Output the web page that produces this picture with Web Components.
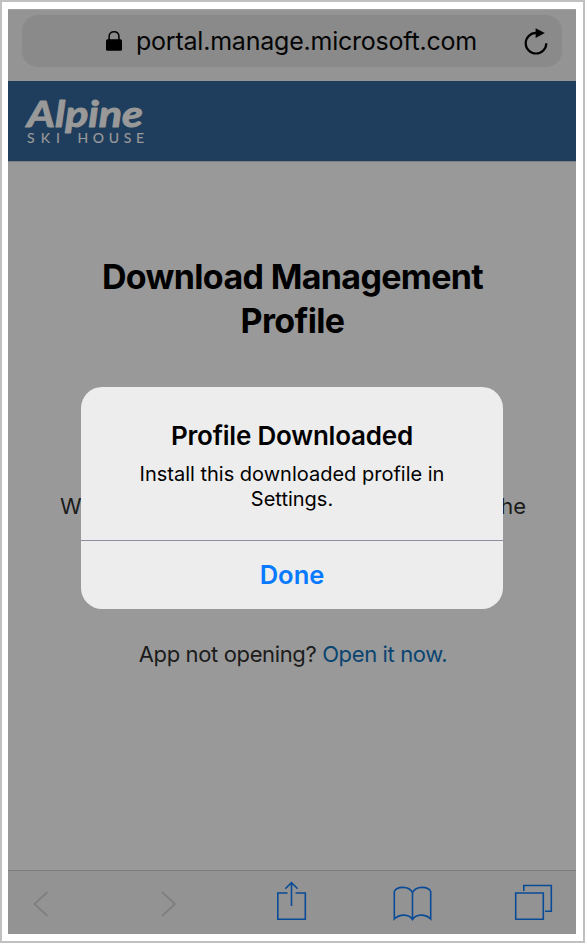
<!DOCTYPE html>
<html lang="en">
<head>
<meta charset="utf-8">
<title>Download Management Profile</title>
<style>
html,body{margin:0;height:100%;background:#fff;font-family:Inter,"Liberation Sans",sans-serif}
</style>
</head>
<body>
<phone-screen>
  <address-bar slot="top">portal.manage.microsoft.com</address-bar>
  <brand-header slot="top"></brand-header>
  <profile-page>
    <span slot="title">Download Management<br>Profile</span>
    <span slot="start">W</span><span slot="end">he</span>
    <span slot="question">App not opening?</span>
    <span slot="link">Open it now.</span>
  </profile-page>
  <browser-toolbar slot="bottom"></browser-toolbar>
  <alert-dialog slot="overlay">
    <span slot="title">Profile Downloaded</span>
    Install this downloaded profile in<br>Settings.
    <span slot="action">Done</span>
  </alert-dialog>
</phone-screen>
<script>
const define = (name, html) => customElements.define(name, class extends HTMLElement {
  constructor() {
    super();
    this.attachShadow({ mode: 'open' }).innerHTML = html;
  }
});

define('phone-screen', `
<style>
:host{display:block;box-sizing:border-box;width:585px;height:943px;border:2px solid #c0c0c0;padding:7px 7px 7px 6px;background:#fff}
.screen{position:relative;box-sizing:border-box;width:568px;height:925px;display:grid;grid-template-rows:auto 1fr auto;background:#999}
.overlay{position:absolute;left:73px;top:378px;width:422px}
</style>
<div class="screen"><div><slot name="top"></slot></div><slot></slot><slot name="bottom"></slot><div class="overlay"><slot name="overlay"></slot></div></div>`);

define('address-bar', `
<style>
:host{display:block;box-sizing:border-box;height:72px;padding:5px 14px 0;background:#949494;border-top:1px solid #a2a2a2}
.field{box-sizing:border-box;height:52px;border-radius:16px;background:#8a8a8a;display:grid;grid-template-columns:84px 30px 1fr 39px;align-items:center;color:#050505}
.url{font-size:25px;letter-spacing:-.22px;white-space:nowrap;line-height:52px}
svg{display:block}
.lock{justify-self:start}
</style>
<div class="field"><i></i>
<svg class="lock" width="16" height="20" viewBox="0 0 16 20"><path d="M3.100 9V5.600C3.100 2.400 5.200.8 8 .8s4.900 1.600 4.900 4.800V9" fill="none" stroke="#000" stroke-width="1.500"/><rect x="0" y="8.300" width="16" height="11.500" rx="1.500" fill="#000"/></svg>
<span class="url"><slot></slot></span>
<svg width="26" height="28" viewBox="0 0 26 28"><path d="M13 5.900A10.300 10.300 0 1 0 23.300 16.200" fill="none" stroke="#000" stroke-width="2.200"/><path d="M12.600 1.200V11L21.800 5.900Z" fill="#000"/></svg>
</div>`);

define('brand-header', `
<style>
:host{display:block;box-sizing:border-box;height:81px;background:#1f3d5c;border-bottom:1px solid #808080;padding:15px 18px}
svg{display:block;overflow:visible}
</style>
<svg width="124" height="50" viewBox="0 0 124 50" fill="#999">
<text x="1" y="31" font-family="Lato" font-style="italic" font-weight="700" font-size="37" textLength="116" lengthAdjust="spacingAndGlyphs" stroke="#999" stroke-width="1" stroke-linejoin="round">Alpine</text>
<text x="1" y="46.500" font-family="Lato" font-size="14" textLength="33" stroke="#999" stroke-width=".2">SKI</text>
<text x="51.500" y="46.500" font-family="Lato" font-size="14" textLength="66.500" stroke="#999" stroke-width=".2">HOUSE</text>
</svg>`);

define('profile-page', `
<style>
:host{display:block;padding:93px 50px 0 52px;color:#1b1b1b;font-size:22px}
h1{margin:0 1px 0 0;text-align:center;font-size:34px;line-height:44px;font-weight:700;letter-spacing:-.65px;color:#000;white-space:nowrap}
.row{display:flex;justify-content:space-between;margin-top:148px;line-height:30px}
p{margin:118px 0 0;line-height:30px;text-align:center;white-space:nowrap;letter-spacing:-.37px}
.link{color:#0a4471}
</style>
<h1><slot name="title"></slot></h1>
<div class="row"><slot name="start"></slot><slot name="end"></slot></div>
<p><slot name="question"></slot> <span class="link"><slot name="link"></slot></span></p>`);

define('browser-toolbar', `
<style>
:host{display:block;box-sizing:border-box;height:64px;border-top:1px solid #7c7c7c;background:#939393}
svg{display:block}
</style>
<svg width="568" height="63" viewBox="8 871 568 63" fill="none" stroke="#0a4b97" stroke-width="1.600">
<g stroke="#7f7f7f" stroke-width="1.800"><path d="M47.500 892 34.500 904 47.500 916"/><path d="M162 892 175 904 162 916"/></g>
<path d="M287.500 893H277.800V919.200H305.300V893H295.500M291.500 906V883M285.300 888.700 291.500 882.700 297.700 888.700"/>
<path d="M412.500 920V892.500C409 885.800 397 885.800 394.300 891.500V919C400 913.500 409 914 412.500 919.500C416 914 425 913.500 430.700 919V891.500C428 885.800 416 885.800 412.500 892.500"/>
<path d="M515.700 893H543.300V919.200H515.700ZM523.800 891V885.500H551.300V911.300H545"/>
</svg>`);

define('alert-dialog', `
<style>
:host{display:block;box-sizing:border-box;height:222px;border-radius:21px;background:#ededed;color:#000;text-align:center;overflow:hidden}
.body{box-sizing:border-box;height:153px;padding-top:33px}
h2{margin:0 0 10px;font-size:26px;line-height:32px;font-weight:600;letter-spacing:-.2px}
.msg{font-size:20px;line-height:25px;white-space:nowrap}
.action{border-top:1px solid #8e8ea4;font-size:25.500px;line-height:68px;font-weight:600;color:#087aff}
</style>
<div class="body"><h2><slot name="title"></slot></h2><div class="msg"><slot></slot></div></div>
<div class="action"><slot name="action"></slot></div>`);
</script>
</body>
</html>
